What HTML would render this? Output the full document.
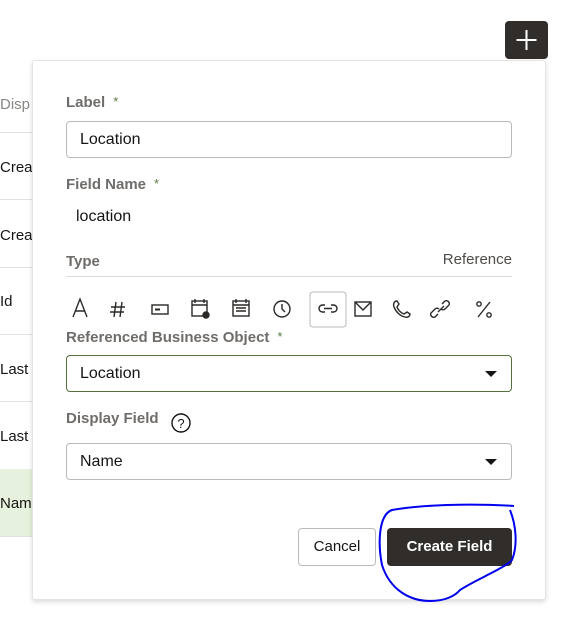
<!DOCTYPE html>
<html><head><style>
body{margin:0;width:564px;height:625px;background:#fff;font-family:"Liberation Sans",sans-serif;position:relative;overflow:hidden}
.row{position:absolute;left:0;width:508px;border-bottom:1px solid #e4e1dd;height:67px}
.rt{position:absolute;left:0;font-size:15px;color:#161513}
.pop{position:absolute;left:32px;top:60px;width:512px;height:538px;background:#fff;border:1px solid #e6e4e1;border-radius:3px;box-shadow:0 2px 5px rgba(0,0,0,.15)}
.lbl{position:absolute;left:66px;font-size:15px;color:#6f6c69;font-weight:bold}
.lbl b{color:#5b7d43;font-weight:normal;margin-left:8px;font-size:13px;vertical-align:top}
.inp{position:absolute;left:66px;width:444px;height:35px;border:1px solid #bcb8b4;border-radius:4px;font-size:16px;color:#161513;line-height:35px;text-indent:13px}
.car{position:absolute;right:14px;top:15px;border-left:6px solid transparent;border-right:6px solid transparent;border-top:6px solid #161513}
</style></head><body>
<div class="row" style="top:65px"></div>
<div class="row" style="top:132px"></div>
<div class="row" style="top:200px"></div>
<div class="row" style="top:267px"></div>
<div class="row" style="top:334px"></div>
<div class="row" style="top:402px"></div>
<div class="row" style="top:469px;background:#e6f2dd"></div>
<div class="rt" style="top:96px;color:#8a8784">Disp</div>
<div class="rt" style="top:159px">Crea</div>
<div class="rt" style="top:227px">Crea</div>
<div class="rt" style="top:293px">Id</div>
<div class="rt" style="top:361px">Last</div>
<div class="rt" style="top:428px">Last</div>
<div class="rt" style="top:495px">Nam</div>
<div style="position:absolute;left:505px;top:21px;width:43px;height:38px;background:#312d2a;border-radius:4px">
<svg width="43" height="38"><path d="M21.5 9v20M11.5 19h20" stroke="#fff" stroke-width="2"/></svg></div>
<div class="pop"></div>
<div class="lbl" style="top:94px">Label<b>*</b></div>
<div class="inp" style="top:121px">Location</div>
<div class="lbl" style="top:176px">Field Name<b>*</b></div>
<div style="position:absolute;left:76px;top:208px;font-size:16px;color:#161513">location</div>
<div class="lbl" style="top:253px">Type</div>
<div style="position:absolute;right:52px;top:251px;font-size:15px;color:#4f4c49">Reference</div>
<div style="position:absolute;left:66px;top:276px;width:446px;border-top:1px solid #dedbd7"></div>
<svg style="position:absolute;left:60px;top:290px" width="450" height="40" fill="none" stroke="#2b2926" stroke-width="1.4">
<path d="M13 27l7-18 7 18M15.5 21h9"/>
<path d="M56 12l-2 15M62 12l-2 15M51 17h14M50 22h14"/>
<rect x="92" y="15" width="16" height="9"/><path d="M95 19.5h5" stroke-width="2"/>
<rect x="132" y="11" width="15" height="15"/><path d="M132 15h15M135 9v4M144 9v4" /><circle cx="146" cy="25" r="3" fill="#2b2926"/>
<rect x="173" y="11" width="16" height="15"/><path d="M173 15h16M176 9v4M186 9v4M176 18h10M176 21h10"/>
<circle cx="222" cy="19" r="8"/><path d="M222 14v5l3 3"/>
<rect x="250" y="2" width="36" height="35" rx="3" stroke="#bcb8b4" stroke-width="1"/>
<path d="M265 15h-2.5a3.5 3.5 0 0 0 0 7h2.5M271 15h2.5a3.5 3.5 0 0 1 0 7h-2.5M264 18.5h8"/>
<rect x="295" y="12" width="16" height="14"/><path d="M295 12l8 8 8-8"/>
<path d="M337 11c-3 0-4 3-3 6 2 5 6 9 11 10 3 1 5-1 5-3l-3-2-3 2c-3-1-6-4-7-7l2-3z"/>
<path d="M378 24l-3 3a3 3 0 0 1-4-4l4-4a3 3 0 0 1 4 0M382 14l3-3a3 3 0 0 1 4 4l-4 4a3 3 0 0 1-4 0M378 22l6-6"/>
<circle cx="419" cy="14" r="2.2"/><circle cx="429" cy="25" r="2.2"/><path d="M430 12l-12 15"/>
</svg>
<div class="lbl" style="top:329px">Referenced Business Object<b>*</b></div>
<div class="inp" style="top:355px;border-color:#54703f">Location<div class="car"></div></div>
<div class="lbl" style="top:410px">Display Field</div>
<svg style="position:absolute;left:170px;top:412px" width="22" height="22"><circle cx="11" cy="11" r="9" fill="none" stroke="#161513" stroke-width="1.4"/><text x="11" y="16" font-size="13" text-anchor="middle" font-family="Liberation Sans" fill="#161513">?</text></svg>
<div class="inp" style="top:443px">Name<div class="car"></div></div>
<div style="position:absolute;left:298px;top:528px;width:76px;height:36px;border:1px solid #bcb8b4;border-radius:4px;font-size:15px;line-height:36px;text-align:center;color:#161513">Cancel</div>
<div style="position:absolute;left:387px;top:528px;width:125px;height:38px;background:#312d2a;border-radius:4px;font-size:15px;font-weight:bold;line-height:38px;text-align:center;color:#fff">Create Field</div>
<svg style="position:absolute;left:0;top:0" width="564" height="625" fill="none" stroke="#0000ee" stroke-width="2"><path d="M514 506C470 503 420 505 392 510C378 515 378 545 382 565C390 590 410 601 430 601C445 601 455 596 460 590C475 580 505 568 512 560C518 545 516 525 510 510"/></svg>
</body></html>
